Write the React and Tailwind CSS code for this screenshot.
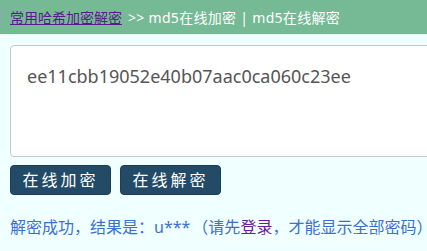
export default function App() {
  return (
    <div
      className="relative w-[427px] h-[251px] overflow-hidden bg-[#f0ffff]"
      style={{ fontFamily: '"Noto Sans", "Noto Sans CJK SC", sans-serif' }}
    >
      <div className="h-[34px] bg-[#76b995] flex items-center pl-[10px] text-[14px] text-white whitespace-nowrap">
        <a href="#" className="text-[#5b1a8f] underline">
          常用哈希加密解密
        </a>
        <span className="ml-[6px] tracking-[0.3px]">&gt;&gt; md5在线加密 | md5在线解密</span>
      </div>
      <div className="pl-[10px] pt-[11px]">
        <div className="w-[440px] h-[112px] bg-white border border-[#c8c8c8] rounded-[4px] pl-[16px] pt-[16px] text-[18px] text-[#555] leading-[28px]">
          ee11cbb19052e40b07aac0ca060c23ee
        </div>
        <div className="flex gap-[9px] mt-[8px]">
          <button className="w-[101px] h-[30px] rounded-[4px] bg-[#234b68] border border-[#1b3d56] text-white text-[16px] tracking-[3px] flex items-center justify-center">
            在线加密
          </button>
          <button className="w-[101px] h-[30px] rounded-[4px] bg-[#234b68] border border-[#1b3d56] text-white text-[16px] tracking-[3px] flex items-center justify-center">
            在线解密
          </button>
        </div>
        <div className="mt-[21px] text-[16px] leading-[22px] text-[#3a6fd3] whitespace-nowrap">
          解密成功，结果是：u***<span className="ml-[2px]">（</span>请先<a href="#" className="text-[#6a1a9a]">登录</a>，才能显示全部密码）
        </div>
      </div>
      <div className="absolute left-[222px] top-[226px] text-[14px] text-white/40 whitespace-nowrap pointer-events-none">
        https://blog.csdn.net/u0</div>
    </div>
  );
}
